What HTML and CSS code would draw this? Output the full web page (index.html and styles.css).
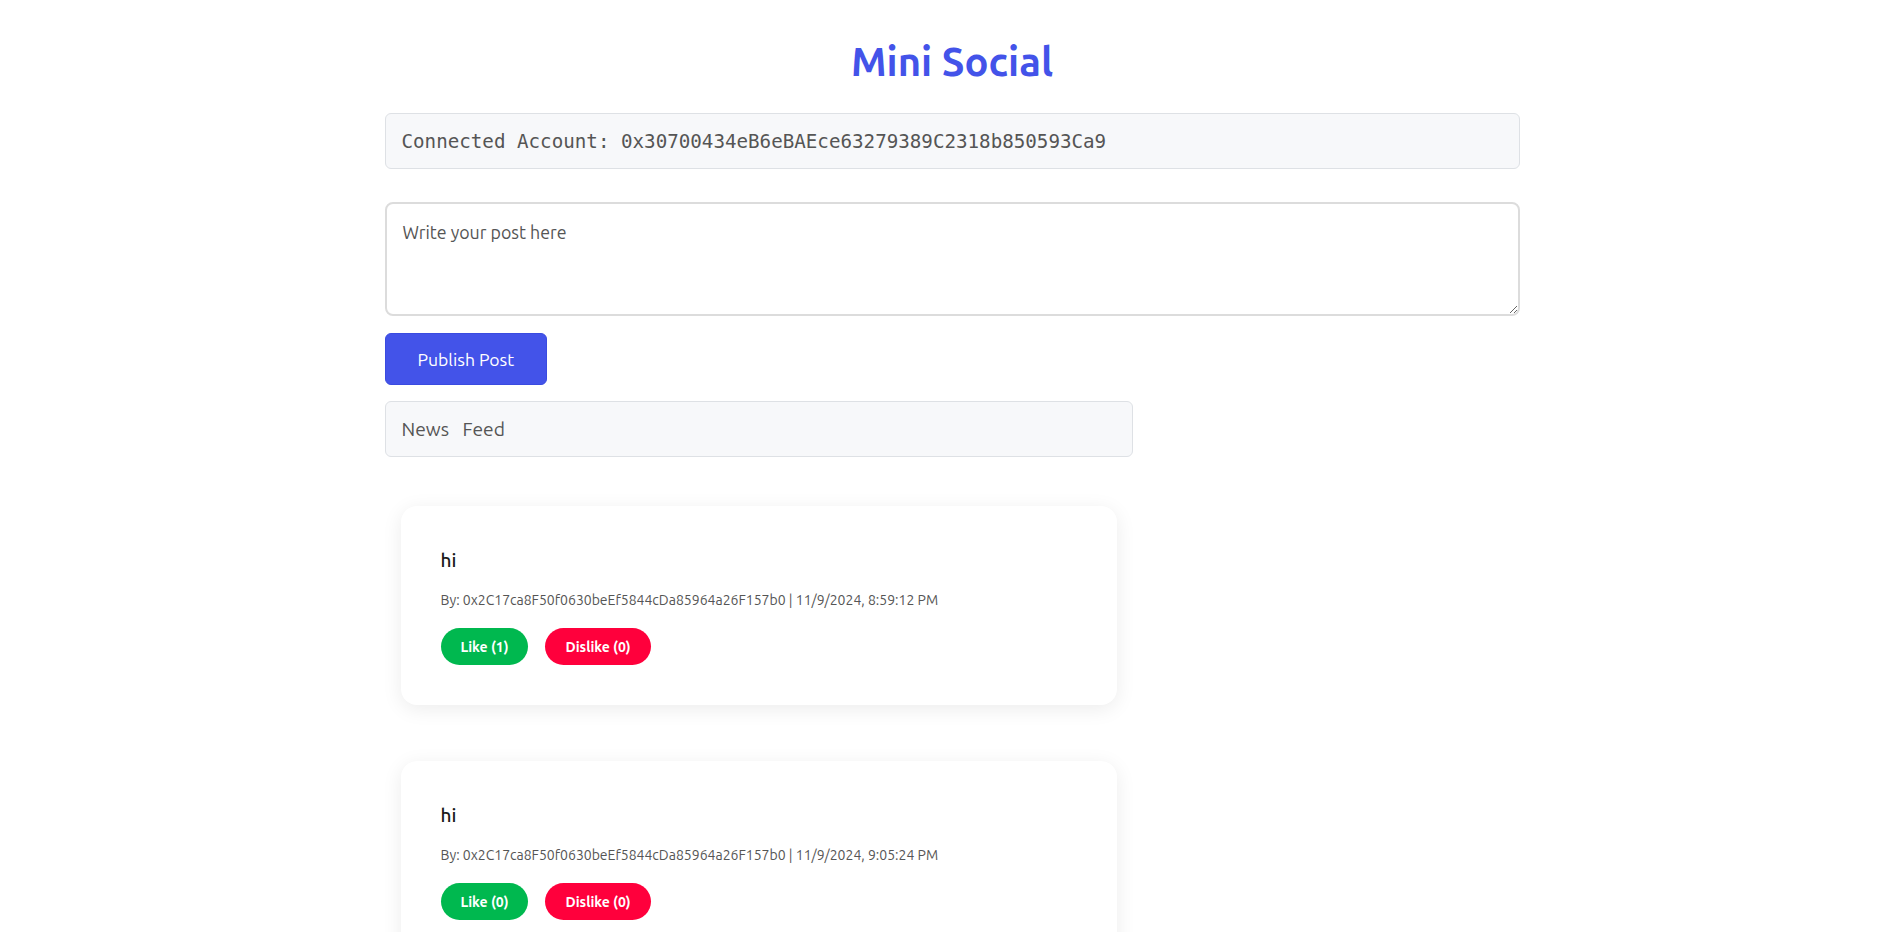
FILE: index.html
```html
<!DOCTYPE html>
<html lang="en">
<head>
<meta charset="utf-8">
<title>Mini Social</title>
<link rel="stylesheet" href="styles.css">
</head>
<body>
<div class="page">
  <h1 class="title">Mini Social</h1>
  <div class="account">Connected Account: 0x30700434eB6eBAEce63279389C2318b850593Ca9</div>
  <textarea class="composer" placeholder="Write your post here"></textarea>
  <button class="publish">Publish Post</button>
  <div class="feed">
    <h2 class="feed-title">News Feed</h2>
    <div class="posts">
      <div class="card">
        <p class="post-text">hi</p>
        <p class="post-meta">By: 0x2C17ca8F50f0630beEf5844cDa85964a26F157b0 | 11/9/2024, 8:59:12 PM</p>
        <div class="actions">
          <button class="btn like">Like (1)</button>
          <button class="btn dislike">Dislike (0)</button>
        </div>
      </div>
      <div class="card">
        <p class="post-text">hi</p>
        <p class="post-meta">By: 0x2C17ca8F50f0630beEf5844cDa85964a26F157b0 | 11/9/2024, 9:05:24 PM</p>
        <div class="actions">
          <button class="btn like">Like (0)</button>
          <button class="btn dislike">Dislike (0)</button>
        </div>
      </div>
    </div>
  </div>
</div>
</body>
</html>
```
FILE: styles.css
```css
* { box-sizing: border-box; }

html, body {
  margin: 0;
  padding: 0;
  background: #ffffff;
}

body {
  font-family: "Ubuntu", "Noto Sans", "DejaVu Sans", sans-serif;
  color: #333;
}

.page {
  max-width: 1155px;
  margin: 0 auto;
  padding: 0 0 40px 20px;
}

.title {
  margin: 0;
  padding-top: 39px;
  height: 113px;
  text-align: center;
  font-size: 40px;
  line-height: 46px;
  font-weight: 700;
  color: #4353e9;
}

.account {
  height: 56px;
  padding: 16px;
  border: 1px solid #dee1e5;
  border-radius: 6px;
  background: #f7f8fa;
  font-family: "DejaVu Sans Mono", monospace;
  font-size: 19.2px;
  line-height: 23px;
  color: #555;
  white-space: nowrap;
}

.composer {
  display: block;
  width: 100%;
  height: 114px;
  margin: 33px 0 17px;
  padding: 16px;
  border: 2px solid #dcdcdc;
  border-radius: 8px;
  font-family: inherit;
  font-size: 17.8px;
  line-height: 24px;
  color: #333;
  background: #fff;
  resize: vertical;
}

.composer::placeholder {
  color: #555;
  opacity: 1;
}

.publish {
  display: block;
  height: 52px;
  padding: 0 32px;
  border: 1px solid #3a4be0;
  border-radius: 6px;
  background: #4353e9;
  color: #fff;
  font-family: inherit;
  font-size: 17.6px;
  cursor: pointer;
}

.feed {
  width: 748px;
  margin-top: 16px;
}

.feed-title {
  margin: 0;
  height: 56px;
  padding: 16px;
  border: 1px solid #dee1e5;
  border-radius: 6px;
  background: #f7f8fa;
  font-size: 19.2px;
  font-weight: 400;
  line-height: 22px;
  word-spacing: 9px;
  color: #555;
}

.posts {
  display: flex;
  flex-direction: column;
  gap: 56px;
  padding: 49px 16px 0;
}

.card {
  padding: 40px;
  border-radius: 16px;
  background: #fff;
  box-shadow: 0 4px 20px rgba(0, 0, 0, 0.08);
}

.post-text {
  margin: 0 0 16px;
  font-size: 19px;
  line-height: 28px;
  font-weight: 500;
  color: #1a1a1a;
}

.post-meta {
  margin: 0 0 18px;
  font-size: 14px;
  line-height: 20px;
  color: #555;
}

.actions {
  display: flex;
  gap: 17px;
}

.btn {
  height: 37px;
  padding: 0 20px;
  border: none;
  border-radius: 20px;
  color: #fff;
  font-family: inherit;
  font-size: 14px;
  font-weight: 700;
  cursor: pointer;
}

.like { background: #00b84f; }
.dislike { background: #ff003c; }
```
